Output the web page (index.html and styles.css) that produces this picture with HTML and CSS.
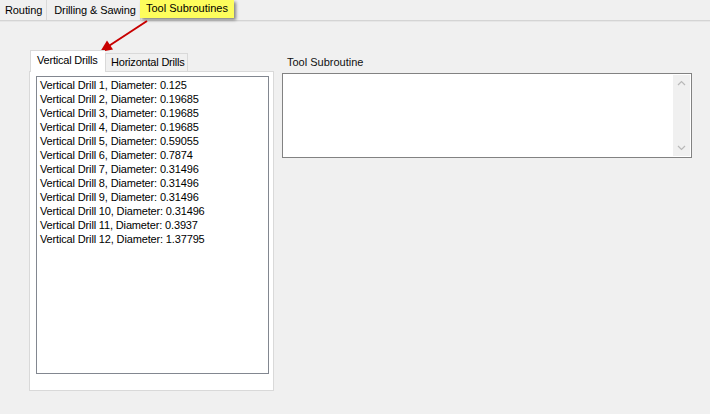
FILE: index.html
```html
<!DOCTYPE html>
<html>
<head>
<meta charset="utf-8">
<link rel="stylesheet" href="styles.css">
</head>
<body>
<div class="tabbar">
  <div class="tab tab-routing">Routing</div>
  <div class="tab tab-drilling">Drilling &amp; Sawing</div>
</div>
<div class="callout">Tool Subroutines</div>
<svg class="arrow" width="160" height="60" viewBox="0 0 160 60">
  <line x1="147" y1="21" x2="108" y2="46.5" stroke="#c80000" stroke-width="2"/>
  <polygon points="100,52 113,49.5 107,40.5" fill="#c80000"/>
</svg>
<div class="main">
  <div class="left">
    <div class="subtabs">
      <div class="subtab active">Vertical Drills</div>
      <div class="subtab">Horizontal Drills</div>
    </div>
    <div class="panel">
      <div class="listbox">
        <div class="item">Vertical Drill 1, Diameter: 0.125</div>
        <div class="item">Vertical Drill 2, Diameter: 0.19685</div>
        <div class="item">Vertical Drill 3, Diameter: 0.19685</div>
        <div class="item">Vertical Drill 4, Diameter: 0.19685</div>
        <div class="item">Vertical Drill 5, Diameter: 0.59055</div>
        <div class="item">Vertical Drill 6, Diameter: 0.7874</div>
        <div class="item">Vertical Drill 7, Diameter: 0.31496</div>
        <div class="item">Vertical Drill 8, Diameter: 0.31496</div>
        <div class="item">Vertical Drill 9, Diameter: 0.31496</div>
        <div class="item">Vertical Drill 10, Diameter: 0.31496</div>
        <div class="item">Vertical Drill 11, Diameter: 0.3937</div>
        <div class="item">Vertical Drill 12, Diameter: 1.37795</div>
      </div>
    </div>
  </div>
  <div class="right">
    <div class="label">Tool Subroutine</div>
    <div class="textbox">
      <div class="textarea"></div>
      <div class="scrollbar">
        <svg width="17" height="10" viewBox="0 0 17 10"><polyline points="5,7 8.5,3.5 12,7" fill="none" stroke="#b9b9b9" stroke-width="1.2"/></svg>
        <svg width="17" height="10" viewBox="0 0 17 10"><polyline points="5,3 8.5,6.5 12,3" fill="none" stroke="#b9b9b9" stroke-width="1.2"/></svg>
      </div>
    </div>
  </div>
</div>
</body>
</html>
```

FILE: styles.css
```css
html, body {
  margin: 0;
  padding: 0;
}
body {
  width: 710px;
  height: 414px;
  overflow: hidden;
  background: #f0f0f0;
  font-family: "Liberation Sans", Arial, sans-serif;
  font-size: 11px;
  color: #000;
  position: relative;
}
.tabbar {
  display: flex;
  height: 20px;
  border-bottom: 1px solid #d4d4d4;
  box-shadow: 0 1px 0 #e6e6e6;
}
.tab {
  line-height: 20px;
  border-right: 1px solid #d9d9d9;
  background: #f0f0f0;
  white-space: nowrap;
  letter-spacing: -0.1px;
}
.tab-routing {
  padding: 0 4px 0 5px;
}
.tab-drilling {
  padding: 0 4px 0 7px;
}
.callout {
  position: absolute;
  left: 140px;
  top: 0;
  width: 88px;
  height: 18px;
  padding-left: 6px;
  line-height: 17px;
  background: #fdfd5c;
  box-shadow: 2px 2px 3px rgba(0, 0, 0, 0.45);
  white-space: nowrap;
}
.arrow {
  position: absolute;
  left: 0;
  top: 0;
}
.main {
  display: flex;
  padding-top: 29px;
  padding-left: 29px;
  gap: 8px;
}
.left {
  width: 245px;
  display: flex;
  flex-direction: column;
}
.subtabs {
  display: flex;
  align-items: flex-end;
  height: 21px;
  padding-left: 1px;
  position: relative;
  z-index: 1;
}
.subtab {
  box-sizing: border-box;
  border: 1px solid #d9d9d9;
  border-bottom: none;
  background: #f0f0f0;
  height: 18px;
  line-height: 17px;
  padding: 0 0 0 5px;
  width: 83px;
  white-space: nowrap;
  overflow: hidden;
  letter-spacing: -0.2px;
}
.subtab.active {
  background: #fff;
  height: 22px;
  margin-bottom: -1px;
  line-height: 19px;
  width: 75px;
  padding: 0 0 0 6px;
  border-right: none;
}
.panel {
  box-sizing: border-box;
  height: 320px;
  background: #fff;
  border: 1px solid #d9d9d9;
  padding: 4px 4px 0 6px;
}
.listbox {
  box-sizing: border-box;
  width: 233px;
  height: 298px;
  border: 1px solid #828790;
  padding: 1px 3px;
}
.item {
  line-height: 14px;
  white-space: nowrap;
  letter-spacing: -0.15px;
}
.right {
  display: flex;
  flex-direction: column;
}
.label {
  margin-top: 5px;
  padding-left: 5px;
  line-height: 14px;
  color: #111;
}
.textbox {
  box-sizing: border-box;
  margin-top: 4px;
  width: 410px;
  height: 85px;
  border: 1px solid #828282;
  background: #fff;
  display: flex;
  padding: 1px 1px 1px 0;
}
.textarea {
  flex: 1;
}
.scrollbar {
  width: 17px;
  background: #f0f0f0;
  display: flex;
  flex-direction: column;
  justify-content: space-between;
  padding: 3px 0 3px;
}
.scrollbar svg {
  display: block;
}
```
